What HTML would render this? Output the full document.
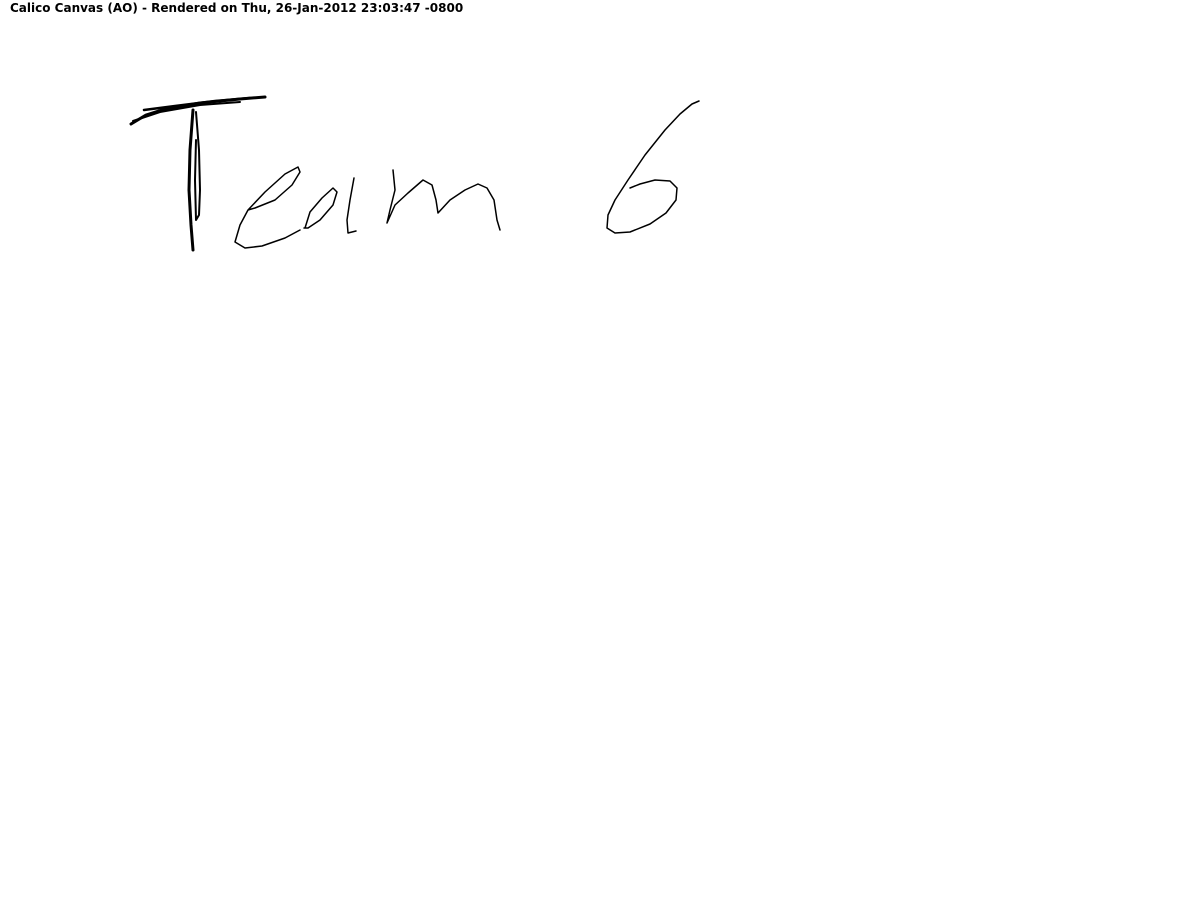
<!DOCTYPE html>
<html><head><meta charset="utf-8"><style>
html,body{margin:0;padding:0;background:#fff;width:1200px;height:900px;overflow:hidden}
.h{position:absolute;left:10px;top:1px;font:bold 12px "DejaVu Sans","Liberation Sans",sans-serif;color:#000;white-space:nowrap;letter-spacing:0px}
svg{position:absolute;left:0;top:0}
</style></head><body>
<div class="h">Calico Canvas (AO) - Rendered on Thu, 26-Jan-2012 23:03:47 -0800</div>
<svg width="1200" height="900" fill="none" stroke="#000" stroke-linecap="round" stroke-linejoin="round">
<path d="M131,124 L146,115 L165,109 L200,103 L240,99 L265,97" stroke-width="3"/>
<path d="M144,110 L175,106 L215,101 L250,98" stroke-width="2.5"/>
<path d="M133,121 L160,112 L200,105 L240,102" stroke-width="2"/>
<path d="M193,110 L190,150 L189,190 L191,225 L193,250" stroke-width="3"/>
<path d="M196,112 L199,150 L200,190 L199,215 L196,220 L195,180 L196,140" stroke-width="2"/>
<path d="M248,210 L265,192 L285,174 L298,167 L300,172 L292,185 L275,200 L255,208 L248,210 L240,225 L235,242 L245,248 L262,246 L285,238 L300,230" stroke-width="1.5"/>
<path d="M305,228 L310,212 L322,198 L333,188 L337,192 L333,205 L320,220 L308,228 L304,228" stroke-width="1.5"/>
<path d="M354,178 L350,200 L347,220 L348,233 L356,231" stroke-width="1.5"/>
<path d="M393,170 L395,190 L390,210 L387,223 L395,205 L408,193 L423,180 L432,185 L436,200 L438,213 L450,200 L465,190 L478,184 L487,188 L494,200 L497,220 L500,230" stroke-width="1.5"/>
<path d="M699,101 L692,104 L680,114 L665,130 L645,155 L628,180 L615,200 L608,215 L607,228 L615,233 L630,232 L650,224 L666,213 L676,200 L677,188 L670,181 L655,180 L640,184 L630,188" stroke-width="1.5"/>
</svg>
</body></html>
